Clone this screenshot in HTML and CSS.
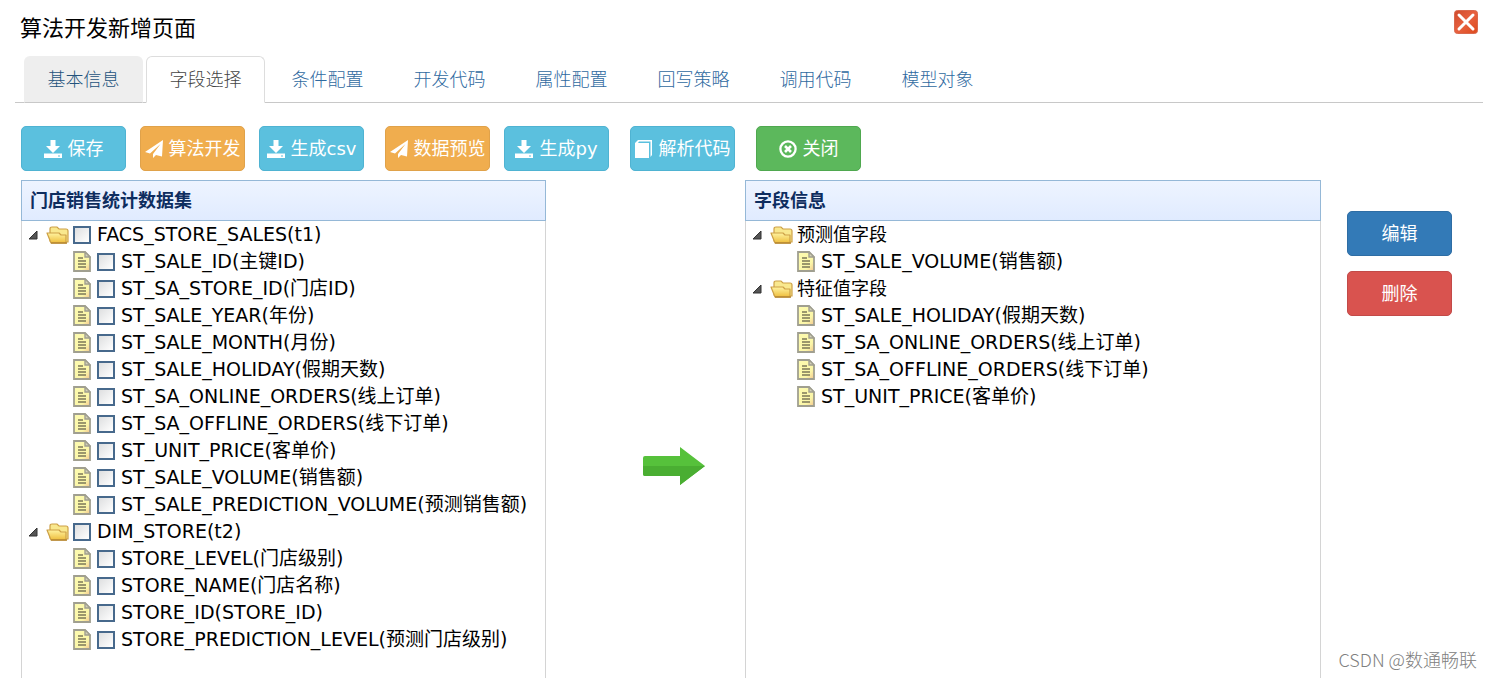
FILE: index.html
```
<!DOCTYPE html>
<html lang="zh-CN">
<head>
<meta charset="utf-8">
<title>算法开发新增页面</title>
<link rel="stylesheet" href="styles.css">
</head>
<body>
<svg class="sprite" aria-hidden="true">
  <defs>
    <linearGradient id="folder-fill" x1="0" y1="0" x2="0" y2="1"><stop offset="0" stop-color="#fff3a0"/><stop offset="1" stop-color="#eebd3c"/></linearGradient>
    <linearGradient id="page-fill" x1="0" y1="0" x2="1" y2="1"><stop offset="0" stop-color="#fdfbb0"/><stop offset="0.7" stop-color="#fbf6a8"/><stop offset="1" stop-color="#f3c58e"/></linearGradient>
    <linearGradient id="close-fill" x1="0" y1="0" x2="1" y2="1"><stop offset="0" stop-color="#cf4a2c"/><stop offset="0.5" stop-color="#e8613f"/><stop offset="1" stop-color="#dc4a1c"/></linearGradient>
  </defs>
  <symbol id="caret" viewBox="0 0 10 10"><path d="M9 1v8H1z" fill="#555" stroke="#333" stroke-linejoin="round"/></symbol>
  <symbol id="folder" viewBox="0 0 24 20">
    <path d="M4 16V4q0-2 2-2h5l2 2h7q2 0 2 2v11H5z" fill="#f9e88e" stroke="#cda046" stroke-width="1.2"/>
    <path d="M1 8h12l2 2h5v8H5z" fill="url(#folder-fill)" stroke="#cda046" stroke-width="1.2" stroke-linejoin="round"/>
    <path d="M5 18h16" stroke="#b58630" stroke-width="1.5"/>
  </symbol>
  <symbol id="page" viewBox="0 0 18 21">
    <path d="M1 1h11l5 5v14H1z" fill="url(#page-fill)" stroke="#a09f90" stroke-width="1.8"/>
    <path d="M12 1v5h5z" fill="#d4d2b8" stroke="#a09f90" stroke-width="1.4"/>
    <path d="M5 7h5M5 10h8M5 13h8M5 16h8" stroke="#7c7858" stroke-width="1.3"/>
  </symbol>
  <symbol id="download" viewBox="0 0 18 18"><path d="M6.500 0h5v6H16l-7 7-7-7h4.500zM0 13.500h18V18H0z" fill="currentColor"/><path d="M14 16h2" stroke="#5bc0de" stroke-width="1.2"/></symbol>
  <symbol id="plane" viewBox="0 0 18 18"><path d="M18 0L0 12l5 1.500L15.500 4 8 14v4l3-3 6 1.500z" fill="currentColor"/></symbol>
  <symbol id="book" viewBox="0 0 18 18"><path d="M0 3L3 0h14v15l-1.500 2V1.500H4L3 3h11v15H0z" fill="currentColor"/></symbol>
  <symbol id="cancel" viewBox="0 0 18 18"><circle cx="9" cy="9" r="7.600" fill="none" stroke="currentColor" stroke-width="2.300"/><path d="M6 6l6 6M12 6l-6 6" stroke="currentColor" stroke-width="2.600"/></symbol>
</svg>

<header class="titlebar">
  <h1 class="title">算法开发新增页面</h1>
  <button class="close" type="button" aria-label="关闭窗口">
    <svg width="24" height="24" viewBox="0 0 24 24"><rect x="0.500" y="0.500" width="23" height="23" rx="3" fill="url(#close-fill)" stroke="#d9694e"/><path d="M5 5l14 14M19 5l-14 14" stroke="#fff" stroke-width="3" stroke-linecap="round"/></svg>
  </button>
</header>

<nav class="tabs">
  <a class="tab tab-hover" href="#base">基本信息</a>
  <a class="tab tab-active" href="#fields" aria-current="page">字段选择</a>
  <a class="tab" href="#conditions">条件配置</a>
  <a class="tab" href="#code">开发代码</a>
  <a class="tab" href="#attributes">属性配置</a>
  <a class="tab" href="#writeback">回写策略</a>
  <a class="tab" href="#invoke">调用代码</a>
  <a class="tab" href="#models">模型对象</a>
</nav>

<div class="toolbar">
  <div class="group">
    <button class="btn info" type="button"><svg class="glyph"><use href="#download"/></svg>保存</button>
    <button class="btn warning" type="button"><svg class="glyph"><use href="#plane"/></svg>算法开发</button>
    <button class="btn info" type="button"><svg class="glyph"><use href="#download"/></svg>生成csv</button>
  </div>
  <div class="group">
    <button class="btn warning" type="button"><svg class="glyph"><use href="#plane"/></svg>数据预览</button>
    <button class="btn info" type="button"><svg class="glyph"><use href="#download"/></svg>生成py</button>
  </div>
  <button class="btn info" type="button"><svg class="glyph"><use href="#book"/></svg>解析代码</button>
  <button class="btn success" type="button"><svg class="glyph"><use href="#cancel"/></svg>关闭</button>
</div>

<main class="workspace">
  <section class="panel">
    <h2 class="panel-title">门店销售统计数据集</h2>
    <ul class="tree">
      <li>
        <div class="row"><button class="toggle" type="button" aria-label="折叠"><svg class="caret"><use href="#caret"/></svg></button><svg class="folder"><use href="#folder"/></svg><label class="pick"><input class="check" type="checkbox">FACS_STORE_SALES(t1)</label></div>
        <ul class="branch">
          <li class="row"><svg class="page"><use href="#page"/></svg><label class="pick"><input class="check" type="checkbox">ST_SALE_ID(主键ID)</label></li>
          <li class="row"><svg class="page"><use href="#page"/></svg><label class="pick"><input class="check" type="checkbox">ST_SA_STORE_ID(门店ID)</label></li>
          <li class="row"><svg class="page"><use href="#page"/></svg><label class="pick"><input class="check" type="checkbox">ST_SALE_YEAR(年份)</label></li>
          <li class="row"><svg class="page"><use href="#page"/></svg><label class="pick"><input class="check" type="checkbox">ST_SALE_MONTH(月份)</label></li>
          <li class="row"><svg class="page"><use href="#page"/></svg><label class="pick"><input class="check" type="checkbox">ST_SALE_HOLIDAY(假期天数)</label></li>
          <li class="row"><svg class="page"><use href="#page"/></svg><label class="pick"><input class="check" type="checkbox">ST_SA_ONLINE_ORDERS(线上订单)</label></li>
          <li class="row"><svg class="page"><use href="#page"/></svg><label class="pick"><input class="check" type="checkbox">ST_SA_OFFLINE_ORDERS(线下订单)</label></li>
          <li class="row"><svg class="page"><use href="#page"/></svg><label class="pick"><input class="check" type="checkbox">ST_UNIT_PRICE(客单价)</label></li>
          <li class="row"><svg class="page"><use href="#page"/></svg><label class="pick"><input class="check" type="checkbox">ST_SALE_VOLUME(销售额)</label></li>
          <li class="row"><svg class="page"><use href="#page"/></svg><label class="pick"><input class="check" type="checkbox">ST_SALE_PREDICTION_VOLUME(预测销售额)</label></li>
        </ul>
      </li>
      <li>
        <div class="row"><button class="toggle" type="button" aria-label="折叠"><svg class="caret"><use href="#caret"/></svg></button><svg class="folder"><use href="#folder"/></svg><label class="pick"><input class="check" type="checkbox">DIM_STORE(t2)</label></div>
        <ul class="branch">
          <li class="row"><svg class="page"><use href="#page"/></svg><label class="pick"><input class="check" type="checkbox">STORE_LEVEL(门店级别)</label></li>
          <li class="row"><svg class="page"><use href="#page"/></svg><label class="pick"><input class="check" type="checkbox">STORE_NAME(门店名称)</label></li>
          <li class="row"><svg class="page"><use href="#page"/></svg><label class="pick"><input class="check" type="checkbox">STORE_ID(STORE_ID)</label></li>
          <li class="row"><svg class="page"><use href="#page"/></svg><label class="pick"><input class="check" type="checkbox">STORE_PREDICTION_LEVEL(预测门店级别)</label></li>
        </ul>
      </li>
    </ul>
  </section>

  <div class="transfer">
    <button class="move" type="button" aria-label="添加到字段信息">
      <svg width="62" height="40" viewBox="0 0 62 40"><path d="M2 10h35V1l25 19-25 19v-9H2q-2 0-2-2V12q0-2 2-2z" fill="#56c13b"/><path d="M0 20h62L37 39v-9H2q-2 0-2-2z" fill="#4aae32"/></svg>
    </button>
  </div>

  <section class="panel">
    <h2 class="panel-title">字段信息</h2>
    <ul class="tree">
      <li>
        <div class="row"><button class="toggle" type="button" aria-label="折叠"><svg class="caret"><use href="#caret"/></svg></button><svg class="folder"><use href="#folder"/></svg><span class="name">预测值字段</span></div>
        <ul class="branch">
          <li class="row"><svg class="page"><use href="#page"/></svg><span class="name">ST_SALE_VOLUME(销售额)</span></li>
        </ul>
      </li>
      <li>
        <div class="row"><button class="toggle" type="button" aria-label="折叠"><svg class="caret"><use href="#caret"/></svg></button><svg class="folder"><use href="#folder"/></svg><span class="name">特征值字段</span></div>
        <ul class="branch">
          <li class="row"><svg class="page"><use href="#page"/></svg><span class="name">ST_SALE_HOLIDAY(假期天数)</span></li>
          <li class="row"><svg class="page"><use href="#page"/></svg><span class="name">ST_SA_ONLINE_ORDERS(线上订单)</span></li>
          <li class="row"><svg class="page"><use href="#page"/></svg><span class="name">ST_SA_OFFLINE_ORDERS(线下订单)</span></li>
          <li class="row"><svg class="page"><use href="#page"/></svg><span class="name">ST_UNIT_PRICE(客单价)</span></li>
        </ul>
      </li>
    </ul>
  </section>

  <div class="actions">
    <button class="btn primary" type="button">编辑</button>
    <button class="btn danger" type="button">删除</button>
  </div>
</main>
<div class="watermark">CSDN @数通畅联</div>
</body>
</html>
```
FILE: styles.css
```
* { box-sizing: border-box; }

body {
  margin: 0;
  min-height: 100vh;
  display: flex;
  flex-direction: column;
  position: relative;
  background: #fff;
  color: #000;
  font-family: "DejaVu Sans", "Noto Sans CJK SC", sans-serif;
  font-size: 18px;
  font-weight: 400;
  line-height: 27px;
}

button { font: inherit; cursor: pointer; }
ul { list-style: none; margin: 0; padding: 0; }
.sprite { position: absolute; width: 0; height: 0; }

.titlebar {
  display: flex;
  justify-content: space-between;
  align-items: flex-start;
  height: 56px;
  padding: 10px 14px 0 20px;
}
.title {
  margin: 0;
  font-family: "Noto Sans CJK SC", sans-serif;
  font-size: 22px;
  font-weight: 400;
  line-height: 32px;
}
.close { padding: 0; border: 0; background: none; display: flex; }

.tabs {
  display: flex;
  gap: 3px;
  margin: 0 9px 0 15px;
  padding-left: 9px;
  border-bottom: 1px solid #c8c8c8;
}
.tab {
  min-width: 119px;
  height: 47px;
  margin-bottom: -1px;
  border: 1px solid transparent;
  border-radius: 6px 6px 0 0;
  text-align: center;
  line-height: 45px;
  color: #2f6a9f;
  font-weight: 300;
  text-decoration: none;
}
.tab-hover { background: #eee; border-bottom-color: #c8c8c8; color: #23527c; }
.tab-active { background: #fff; border-color: #ddd; border-bottom-color: #fff; color: #444; }

.toolbar {
  display: flex;
  flex-wrap: wrap;
  gap: 21px;
  padding: 23px 21px 9px;
}
.group { display: flex; gap: 14px; }
.btn {
  display: flex;
  align-items: center;
  justify-content: center;
  gap: 6px;
  width: 105px;
  height: 45px;
  padding: 0;
  border: 1px solid;
  border-radius: 5px;
  color: #fff;
  white-space: nowrap;
}
.glyph { width: 18px; height: 18px; flex: none; }
.info { background: #5bc0de; border-color: #4fb3d2; }
.warning { background: #f0ad4e; border-color: #e0a24a; }
.success { background: #5cb85c; border-color: #4fa84f; }
.primary { background: #337ab7; border-color: #2e6da4; }
.danger { background: #d9534f; border-color: #c24a48; }

.workspace {
  flex: 1;
  display: grid;
  grid-template-columns: 525fr 199fr 576fr 131px;
  padding: 0 40px 0 21px;
}
.panel { border: 1px solid #d4d4d4; border-width: 0 1px; }
.panel-title {
  margin: 0 -1px;
  height: 41px;
  padding-left: 8px;
  border: 1px solid #95b8d7;
  background: linear-gradient(#eef4ff, #e0ebff);
  color: #0e2d5f;
  font-size: 18px;
  font-weight: 700;
  line-height: 39px;
}
.row { display: flex; align-items: center; height: 27px; white-space: nowrap; }
.branch { padding-left: 48px; font-size: 19px; }
.toggle {
  display: flex;
  justify-content: center;
  width: 24px;
  padding: 0 2px 0 0;
  border: 0;
  background: none;
}
.caret { width: 10px; height: 10px; }
.folder { width: 24px; height: 20px; flex: none; }
.page { width: 18px; height: 21px; margin: 0 3px; flex: none; }
.name { padding-left: 3px; }
.pick { display: flex; align-items: center; gap: 6px; padding-left: 3px; font-size: 19px; }
.check {
  appearance: none;
  width: 18px;
  height: 18px;
  margin: 0;
  border: 2px solid #47698c;
  background: linear-gradient(135deg, #dedfe0, #fff);
}

.transfer { display: flex; justify-content: center; align-items: flex-start; padding: 266px 0 0 57px; }
.move { display: flex; padding: 0; border: 0; background: none; }
.actions { display: flex; flex-direction: column; gap: 15px; padding: 31px 0 0 26px; }

.watermark {
  position: absolute;
  right: 15px;
  bottom: 5px;
  color: #808080;
  font-family: "Noto Sans CJK SC", sans-serif;
  font-weight: 300;
}
```
